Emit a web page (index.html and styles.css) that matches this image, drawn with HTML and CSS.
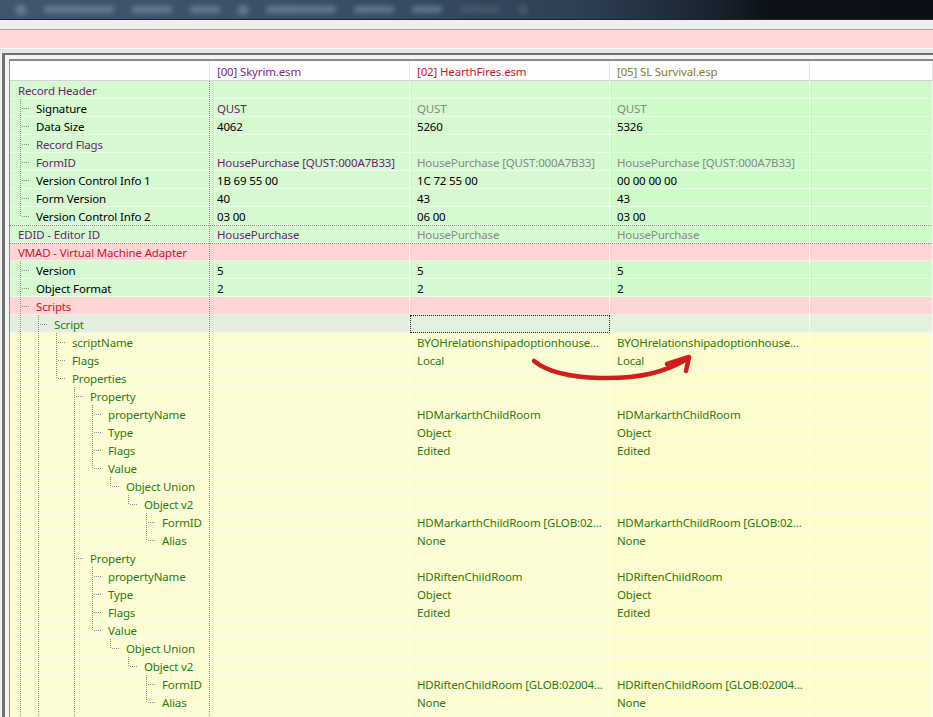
FILE: index.html
```html
<!DOCTYPE html>
<html lang="en">
<head>
    <meta charset="UTF-8">
    <meta name="viewport" content="width=device-width, initial-scale=1.0">
    <title>QUST HousePurchase - record view</title>
    <link rel="stylesheet" href="styles.css">
</head>
<body>
    <div class="taskbar">
        <span class="blob icon"></span>
        <span class="blob w70"></span>
        <span class="blob w40"></span>
        <span class="blob w30"></span>
        <span class="blob icon"></span>
        <span class="blob w70"></span>
        <span class="blob w40"></span>
        <span class="blob w30"></span>
        <span class="blob w40 dim"></span>
        <span class="blob icon dim"></span>
    </div>
    <div class="toolstrip"></div>
    <div class="notice"></div>
    <div class="spacer"></div>

    <div class="frame">
        <div class="view">
            <div class="hdr">
                <div class="c1"></div>
                <div class="c2 p">[00] Skyrim.esm</div>
                <div class="c3 r">[02] HearthFires.esm</div>
                <div class="c4 o">[05] SL Survival.esp</div>
                <div class="c5"></div>
            </div>

            <!-- Record Header -->
            <div class="row green">
                <div class="c1 p">Record Header</div>
                <div class="c2"></div><div class="c3"></div><div class="c4"></div><div class="c5"></div>
            </div>
            <div class="row green">
                <div class="c1 k"><i class="g t"></i>Signature</div>
                <div class="c2 p">QUST</div><div class="c3 gy">QUST</div><div class="c4 gy">QUST</div><div class="c5"></div>
            </div>
            <div class="row green">
                <div class="c1 k"><i class="g t"></i>Data Size</div>
                <div class="c2 k">4062</div><div class="c3 k">5260</div><div class="c4 k">5326</div><div class="c5"></div>
            </div>
            <div class="row green">
                <div class="c1 p"><i class="g t"></i>Record Flags</div>
                <div class="c2"></div><div class="c3"></div><div class="c4"></div><div class="c5"></div>
            </div>
            <div class="row green">
                <div class="c1 p"><i class="g t"></i>FormID</div>
                <div class="c2 p">HousePurchase [QUST:000A7B33]</div>
                <div class="c3 gy">HousePurchase [QUST:000A7B33]</div>
                <div class="c4 gy">HousePurchase [QUST:000A7B33]</div>
                <div class="c5"></div>
            </div>
            <div class="row green">
                <div class="c1 k"><i class="g t"></i>Version Control Info 1</div>
                <div class="c2 k">1B 69 55 00</div><div class="c3 k">1C 72 55 00</div><div class="c4 k">00 00 00 00</div><div class="c5"></div>
            </div>
            <div class="row green">
                <div class="c1 k"><i class="g t"></i>Form Version</div>
                <div class="c2 k">40</div><div class="c3 k">43</div><div class="c4 k">43</div><div class="c5"></div>
            </div>
            <div class="row green">
                <div class="c1 k"><i class="g l"></i>Version Control Info 2</div>
                <div class="c2 k">03 00</div><div class="c3 k">06 00</div><div class="c4 k">03 00</div><div class="c5"></div>
            </div>

            <!-- EDID -->
            <div class="row green sep">
                <div class="c1 p">EDID - Editor ID</div>
                <div class="c2 p">HousePurchase</div><div class="c3 gy">HousePurchase</div><div class="c4 gy">HousePurchase</div><div class="c5"></div>
            </div>

            <!-- VMAD -->
            <div class="row pink sep">
                <div class="c1 r">VMAD - Virtual Machine Adapter</div>
                <div class="c2"></div><div class="c3"></div><div class="c4"></div><div class="c5"></div>
            </div>
            <div class="row green">
                <div class="c1 k"><i class="g t"></i>Version</div>
                <div class="c2 k">5</div><div class="c3 k">5</div><div class="c4 k">5</div><div class="c5"></div>
            </div>
            <div class="row green">
                <div class="c1 k"><i class="g t"></i>Object Format</div>
                <div class="c2 k">2</div><div class="c3 k">2</div><div class="c4 k">2</div><div class="c5"></div>
            </div>
            <div class="row pink">
                <div class="c1 r"><i class="g t"></i>Scripts</div>
                <div class="c2"></div><div class="c3"></div><div class="c4"></div><div class="c5"></div>
            </div>
            <div class="row script">
                <div class="c1 gn"><i class="g v"></i><i class="g t"></i>Script</div>
                <div class="c2"></div><div class="c3 focus"></div><div class="c4"></div><div class="c5"></div>
            </div>
            <div class="row yellow">
                <div class="c1 gn"><i class="g v"></i><i class="g v"></i><i class="g t"></i>scriptName</div>
                <div class="c2"></div>
                <div class="c3 gn">BYOHrelationshipadoptionhouse...</div>
                <div class="c4 gn">BYOHrelationshipadoptionhouse...</div>
                <div class="c5"></div>
            </div>
            <div class="row yellow">
                <div class="c1 gn"><i class="g v"></i><i class="g v"></i><i class="g t"></i>Flags</div>
                <div class="c2"></div><div class="c3 gn">Local</div><div class="c4 gn">Local</div><div class="c5"></div>
            </div>
            <div class="row yellow">
                <div class="c1 gn"><i class="g v"></i><i class="g v"></i><i class="g l"></i>Properties</div>
                <div class="c2"></div><div class="c3"></div><div class="c4"></div><div class="c5"></div>
            </div>

            <!-- first property -->
            <div class="row yellow">
                <div class="c1 gn"><i class="g v"></i><i class="g v"></i><i class="g"></i><i class="g t"></i>Property</div>
                <div class="c2"></div><div class="c3"></div><div class="c4"></div><div class="c5"></div>
            </div>
            <div class="row yellow">
                <div class="c1 gn"><i class="g v"></i><i class="g v"></i><i class="g"></i><i class="g v"></i><i class="g t"></i>propertyName</div>
                <div class="c2"></div><div class="c3 gn">HDMarkarthChildRoom</div><div class="c4 gn">HDMarkarthChildRoom</div><div class="c5"></div>
            </div>
            <div class="row yellow">
                <div class="c1 gn"><i class="g v"></i><i class="g v"></i><i class="g"></i><i class="g v"></i><i class="g t"></i>Type</div>
                <div class="c2"></div><div class="c3 gn">Object</div><div class="c4 gn">Object</div><div class="c5"></div>
            </div>
            <div class="row yellow">
                <div class="c1 gn"><i class="g v"></i><i class="g v"></i><i class="g"></i><i class="g v"></i><i class="g t"></i>Flags</div>
                <div class="c2"></div><div class="c3 gn">Edited</div><div class="c4 gn">Edited</div><div class="c5"></div>
            </div>
            <div class="row yellow">
                <div class="c1 gn"><i class="g v"></i><i class="g v"></i><i class="g"></i><i class="g v"></i><i class="g l"></i>Value</div>
                <div class="c2"></div><div class="c3"></div><div class="c4"></div><div class="c5"></div>
            </div>
            <div class="row yellow">
                <div class="c1 gn"><i class="g v"></i><i class="g v"></i><i class="g"></i><i class="g v"></i><i class="g"></i><i class="g l"></i>Object Union</div>
                <div class="c2"></div><div class="c3"></div><div class="c4"></div><div class="c5"></div>
            </div>
            <div class="row yellow">
                <div class="c1 gn"><i class="g v"></i><i class="g v"></i><i class="g"></i><i class="g v"></i><i class="g"></i><i class="g"></i><i class="g l"></i>Object v2</div>
                <div class="c2"></div><div class="c3"></div><div class="c4"></div><div class="c5"></div>
            </div>
            <div class="row yellow">
                <div class="c1 gn"><i class="g v"></i><i class="g v"></i><i class="g"></i><i class="g v"></i><i class="g"></i><i class="g"></i><i class="g"></i><i class="g t"></i>FormID</div>
                <div class="c2"></div>
                <div class="c3 gn">HDMarkarthChildRoom [GLOB:02...</div>
                <div class="c4 gn">HDMarkarthChildRoom [GLOB:02...</div>
                <div class="c5"></div>
            </div>
            <div class="row yellow">
                <div class="c1 gn"><i class="g v"></i><i class="g v"></i><i class="g"></i><i class="g v"></i><i class="g"></i><i class="g"></i><i class="g"></i><i class="g l"></i>Alias</div>
                <div class="c2"></div><div class="c3 gn">None</div><div class="c4 gn">None</div><div class="c5"></div>
            </div>

            <!-- second property -->
            <div class="row yellow">
                <div class="c1 gn"><i class="g v"></i><i class="g v"></i><i class="g"></i><i class="g t"></i>Property</div>
                <div class="c2"></div><div class="c3"></div><div class="c4"></div><div class="c5"></div>
            </div>
            <div class="row yellow">
                <div class="c1 gn"><i class="g v"></i><i class="g v"></i><i class="g"></i><i class="g v"></i><i class="g t"></i>propertyName</div>
                <div class="c2"></div><div class="c3 gn">HDRiftenChildRoom</div><div class="c4 gn">HDRiftenChildRoom</div><div class="c5"></div>
            </div>
            <div class="row yellow">
                <div class="c1 gn"><i class="g v"></i><i class="g v"></i><i class="g"></i><i class="g v"></i><i class="g t"></i>Type</div>
                <div class="c2"></div><div class="c3 gn">Object</div><div class="c4 gn">Object</div><div class="c5"></div>
            </div>
            <div class="row yellow">
                <div class="c1 gn"><i class="g v"></i><i class="g v"></i><i class="g"></i><i class="g v"></i><i class="g t"></i>Flags</div>
                <div class="c2"></div><div class="c3 gn">Edited</div><div class="c4 gn">Edited</div><div class="c5"></div>
            </div>
            <div class="row yellow">
                <div class="c1 gn"><i class="g v"></i><i class="g v"></i><i class="g"></i><i class="g v"></i><i class="g l"></i>Value</div>
                <div class="c2"></div><div class="c3"></div><div class="c4"></div><div class="c5"></div>
            </div>
            <div class="row yellow">
                <div class="c1 gn"><i class="g v"></i><i class="g v"></i><i class="g"></i><i class="g v"></i><i class="g"></i><i class="g l"></i>Object Union</div>
                <div class="c2"></div><div class="c3"></div><div class="c4"></div><div class="c5"></div>
            </div>
            <div class="row yellow">
                <div class="c1 gn"><i class="g v"></i><i class="g v"></i><i class="g"></i><i class="g v"></i><i class="g"></i><i class="g"></i><i class="g l"></i>Object v2</div>
                <div class="c2"></div><div class="c3"></div><div class="c4"></div><div class="c5"></div>
            </div>
            <div class="row yellow">
                <div class="c1 gn"><i class="g v"></i><i class="g v"></i><i class="g"></i><i class="g v"></i><i class="g"></i><i class="g"></i><i class="g"></i><i class="g t"></i>FormID</div>
                <div class="c2"></div>
                <div class="c3 gn">HDRiftenChildRoom [GLOB:02004...</div>
                <div class="c4 gn">HDRiftenChildRoom [GLOB:02004...</div>
                <div class="c5"></div>
            </div>
            <div class="row yellow">
                <div class="c1 gn"><i class="g v"></i><i class="g v"></i><i class="g"></i><i class="g v"></i><i class="g"></i><i class="g"></i><i class="g"></i><i class="g l"></i>Alias</div>
                <div class="c2"></div><div class="c3 gn">None</div><div class="c4 gn">None</div><div class="c5"></div>
            </div>

            <!-- third property, runs past the window -->
            <div class="row yellow">
                <div class="c1 gn"><i class="g v"></i><i class="g v"></i><i class="g"></i><i class="g t"></i>Property</div>
                <div class="c2"></div><div class="c3"></div><div class="c4"></div><div class="c5"></div>
            </div>
        </div>
    </div>

    <!-- hand drawn marker from one file's flags to the other's -->
    <svg class="marker" width="933" height="717" viewBox="0 0 933 717">
        <path d="M534 361 C545 370 565 377 600 378 C640 379 665 372 687 359" />
        <path d="M667 364 L689 357 L686 371" />
    </svg>
</body>
</html>
```

FILE: styles.css
```css
html, body {
    margin: 0;
    height: 717px;
    overflow: hidden;
}

body {
    font-family: 'Segoe UI', 'Noto Sans', Tahoma, sans-serif;
    font-size: 11.5px;
    letter-spacing: -0.15px;
    background-color: #f0f0f0;
    color: #000;
    position: relative;
}

/* blurred desktop taskbar at the top edge */
.taskbar {
    height: 19px;
    border-bottom: 1px solid #1c232c;
    background: linear-gradient(to right, #41566e 0%, #3a4f66 35%, #2e4054 62%, #1a2430 76%, #0d1218 82%, #0b0f15 100%);
    display: flex;
    align-items: center;
    gap: 18px;
    padding-left: 16px;
    overflow: hidden;
}

.blob {
    height: 7px;
    border-radius: 3px;
    background-color: rgba(160, 182, 206, 0.4);
    filter: blur(2.5px);
}

.blob.icon { width: 10px; height: 10px; }
.blob.w70 { width: 70px; }
.blob.w40 { width: 40px; }
.blob.w30 { width: 30px; }
.blob.dim { background-color: rgba(120, 140, 160, 0.25); }

.toolstrip {
    height: 9px;
    background-color: #efefef;
    border-bottom: 1px solid #a3a3a3;
}

.notice {
    height: 18px;
    background-color: #ffd9d9;
    border-bottom: 1px solid #fbfbfb;
}

.spacer {
    height: 4px;
    background-color: #e6e6e6;
}

/* sunken frame round the record view */
.frame {
    margin-left: 2px;
    border-top: 2px solid #6f6f6f;
    border-left: 3px solid #6f6f6f;
    padding: 4px 0 0 4px;
    background-color: #f4f4f4;
}

.view {
    border-top: 2px solid #8a8a8a;
    border-left: 1px solid #8a8a8a;
    background-color: #fff;
}

.hdr, .row {
    display: grid;
    grid-template-columns: 200px 200px 200px 200px 1fr;
}

.hdr > div {
    height: 20px;
    line-height: 22px;
    box-sizing: border-box;
    padding-left: 7px;
    border-bottom: 1px solid #d2d2d2;
    border-right: 1px solid #e4e4e4;
    background-color: #fdfdfd;
    white-space: nowrap;
    overflow: hidden;
}

.hdr .p { color: #7d2a8c; }
.hdr .r { color: #c8182c; }
.hdr .o { color: #85821e; }

.row > div {
    height: 18px;
    line-height: 19px;
    box-sizing: border-box;
    padding-left: 7px;
    border-bottom: 1px solid rgba(255, 255, 255, 0.45);
    border-right: 1px solid rgba(255, 255, 255, 0.7);
    white-space: nowrap;
    overflow: hidden;
    text-overflow: ellipsis;
}

.row > .c1 {
    display: flex;
    padding-left: 8px;
    overflow: visible;
    border-right: none;
    background-image: linear-gradient(#8e8e8e 50%, transparent 50%);
    background-size: 1px 2px;
    background-repeat: repeat-y;
    background-position: right top;
}

/* row colours */
.green > div { background-color: #d6f9d2; }
.green > .c4, .green > .c5 { background-color: #cffbcb; }
.pink > div { background-color: #ffd5d5; }
.script > div { background-color: #e3eedf; }
.script > .c3, .script > .c4, .script > .c5 { background-color: #e3f2dc; }
.yellow > div { background-color: #fdfdd3; }
.yellow > .c4, .yellow > .c5 { background-color: #fcfccd; }

/* dotted line between top level elements */
.sep > div {
    background-image: linear-gradient(to right, #8e8e8e 50%, transparent 50%);
    background-size: 2px 1px;
    background-repeat: repeat-x;
    background-position: left top;
}

.sep > .c1 {
    background-image: linear-gradient(to right, #8e8e8e 50%, transparent 50%), linear-gradient(#8e8e8e 50%, transparent 50%);
    background-size: 2px 1px, 1px 2px;
    background-repeat: repeat-x, repeat-y;
    background-position: left top, right top;
}

.focus {
    outline: 1px dotted #222;
    outline-offset: -1px;
}

/* text colours */
.k { color: #000; }
.p { color: #6a1f6e; }
.r { color: #d11329; }
.gy { color: #888; }
.gn { color: #2b7a14; }

/* tree guides */
.g {
    flex: none;
    width: 18px;
    position: relative;
}

.g.v::before, .g.t::before, .g.l::before {
    content: '';
    position: absolute;
    left: 2px;
    top: 0;
    bottom: -1px;
    width: 1px;
    background: linear-gradient(#8e8e8e 50%, transparent 50%) 0 0 / 1px 2px repeat-y;
}

.g.l::before {
    bottom: auto;
    height: 10px;
}

.g.t::after, .g.l::after {
    content: '';
    position: absolute;
    left: 3px;
    top: 9px;
    width: 9px;
    height: 1px;
    background: linear-gradient(to right, #8e8e8e 50%, transparent 50%) 1px 0 / 2px 1px repeat-x;
}

.marker {
    position: absolute;
    left: 0;
    top: 0;
    pointer-events: none;
    fill: none;
    stroke: #d21d1d;
    stroke-width: 4.5;
    stroke-linecap: round;
    stroke-linejoin: round;
}
```
